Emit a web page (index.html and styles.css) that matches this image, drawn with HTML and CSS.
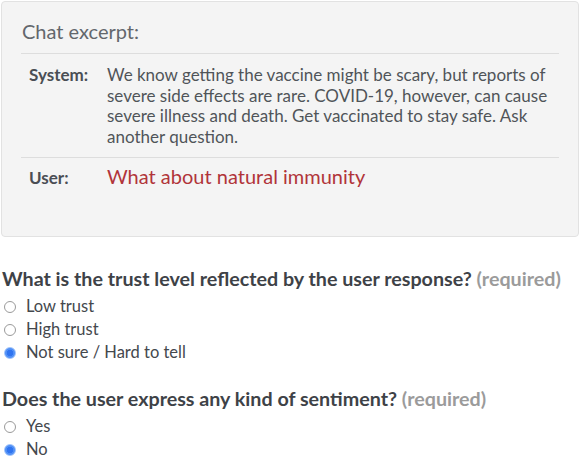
FILE: index.html
```html
<!DOCTYPE html>
<html>
<head>
    <meta charset="UTF-8">
    <title>Annotation</title>
    <link rel="stylesheet" href="styles.css">
</head>
<body>
<div class="excerpt">
    <p class="excerpt_title">Chat excerpt:</p>
    <div class="turn turn_system">
        <span class="speaker">System:</span>
        <span class="msg">We know getting the vaccine might be scary, but reports of severe side effects are rare. COVID-19, however, can cause severe illness and death. Get vaccinated to stay safe. Ask another question.</span>
    </div>
    <div class="turn turn_user">
        <span class="speaker">User:</span>
        <span class="msg msg_user">What about natural immunity</span>
    </div>
</div>

<form class="survey">
    <div class="question">
        <p class="q_title">What is the trust level reflected by the user response? <span class="req">(required)</span></p>
        <label class="opt"><input type="radio" name="trust" value="low"> Low trust</label>
        <label class="opt"><input type="radio" name="trust" value="high"> High trust</label>
        <label class="opt"><input type="radio" name="trust" value="unsure" checked> Not sure / Hard to tell</label>
    </div>

    <div class="question">
        <p class="q_title">Does the user express any kind of sentiment? <span class="req">(required)</span></p>
        <label class="opt"><input type="radio" name="sentiment" value="yes"> Yes</label>
        <label class="opt"><input type="radio" name="sentiment" value="no" checked> No</label>
    </div>
</form>
</body>
</html>
```

FILE: styles.css
```css
* {
    margin: 0px;
    padding: 0px;
    box-sizing: border-box;
}

body {
    font-family: Lato, "Open Sans", sans-serif;
    color: #44484d;
    background: white;
}

.excerpt {
    width: 578px;
    height: 236px;
    margin: 1px;
    padding: 17px 19px 0 19px;
    background-color: #f4f4f4;
    border: 1px solid #e2e2e2;
    border-radius: 4px;
}

.excerpt_title {
    font-size: 20px;
    line-height: 24px;
    color: #63676c;
    padding-left: 1px;
    padding-bottom: 10px;
    border-bottom: 1px solid #dddddd;
}

.turn {
    display: grid;
    grid-template-columns: 78px 1fr;
    align-items: baseline;
    padding-left: 8px;
}

.turn_system {
    padding-top: 10px;
    padding-bottom: 9px;
    border-bottom: 1px solid #dddddd;
}

.turn_user {
    padding-top: 6px;
}

.speaker {
    font-weight: bold;
    font-size: 17px;
    color: #4a4e54;
}

.msg {
    font-size: 17px;
    line-height: 20.7px;
    color: #505459;
}

.msg_user {
    font-size: 20px;
    line-height: 24px;
    color: #b1343a;
}

.survey {
    padding-left: 2px;
    margin-top: 30px;
}

.question {
    margin-bottom: 23px;
}

.question:last-child {
    margin-bottom: 0;
}

.q_title {
    font-size: 19.7px;
    line-height: 24px;
    font-weight: bold;
    color: #3e4247;
    margin-bottom: 4px;
}

.req {
    color: #9b9b9b;
}

.opt {
    display: flex;
    align-items: center;
    gap: 10px;
    font-size: 16.5px;
    line-height: 23px;
    color: #44484d;
}

.opt input {
    appearance: none;
    width: 12px;
    height: 12px;
    margin-left: 2px;
    border: 1px solid #9a9a9a;
    border-radius: 50%;
    background: white;
}

.opt input:checked {
    border: 1px solid #9fc3fa;
    background: radial-gradient(circle, #2f74f0 0 3px, #4f8ff6 3.5px);
}
```
